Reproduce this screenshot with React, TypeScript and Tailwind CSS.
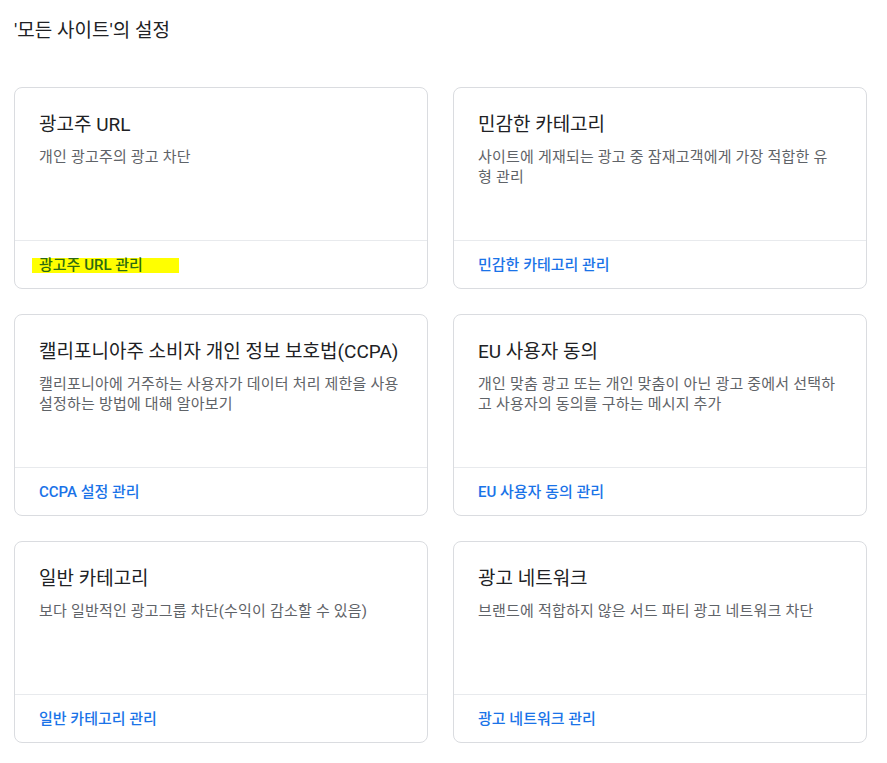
import React from 'react'

type Setting = {
  title: string
  description: string
  link: string
  highlighted?: boolean
}

const SETTINGS: Setting[] = [
  {
    title: '광고주 URL',
    description: '개인 광고주의 광고 차단',
    link: '광고주 URL 관리',
    highlighted: true,
  },
  {
    title: '민감한 카테고리',
    description: '사이트에 게재되는 광고 중 잠재고객에게 가장 적합한 유형 관리',
    link: '민감한 카테고리 관리',
  },
  {
    title: '캘리포니아주 소비자 개인 정보 보호법(CCPA)',
    description: '캘리포니아에 거주하는 사용자가 데이터 처리 제한을 사용 설정하는 방법에 대해 알아보기',
    link: 'CCPA 설정 관리',
  },
  {
    title: 'EU 사용자 동의',
    description: '개인 맞춤 광고 또는 개인 맞춤이 아닌 광고 중에서 선택하고 사용자의 동의를 구하는 메시지 추가',
    link: 'EU 사용자 동의 관리',
  },
  {
    title: '일반 카테고리',
    description: '보다 일반적인 광고그룹 차단(수익이 감소할 수 있음)',
    link: '일반 카테고리 관리',
  },
  {
    title: '광고 네트워크',
    description: '브랜드에 적합하지 않은 서드 파티 광고 네트워크 차단',
    link: '광고 네트워크 관리',
  },
]

const FONT = "font-['Roboto','Noto_Sans_CJK_KR',sans-serif]"

export default function App() {
  return (
    <div className={`min-h-screen bg-white ${FONT} pl-[14px] pt-[19px]`}>
      <h1 className="text-[19px] leading-6 text-[#202124]">'모든 사이트'의 설정</h1>

      <div className="mt-[44px] grid grid-cols-[414px_414px] gap-x-[25px] gap-y-[25px]">
        {SETTINGS.map(s => (
          <SettingCard key={s.title} {...s} />
        ))}
      </div>
    </div>
  )
}

/* -----------------------------
   Sub Components
------------------------------ */

const SettingCard = ({ title, description, link, highlighted }: Setting) => (
  <div className="h-[202px] flex flex-col border border-[#dadce0] rounded-lg bg-white">
    <div className="h-[153px] shrink-0 border-b border-[#e8eaed] px-6 pt-[23px]">
      <div className="text-[19px] leading-7 text-[#202124] whitespace-nowrap">{title}</div>
      <p className="mt-2 w-[361px] break-all text-[15px] leading-5 tracking-[0.2px] text-[#5f6368]">
        {description}
      </p>
    </div>
    <div className="flex-1 flex items-center px-6 pt-[1px]">
      {highlighted ? (
        <span className="-ml-[7px] pl-[7px] inline-block w-[147px] h-[15px] leading-[15px] bg-[#ffff00] text-[15px] font-medium text-[#2b6a12]">
          {link}
        </span>
      ) : (
        <a className="text-[15px] font-medium text-[#1a73e8] cursor-pointer">{link}</a>
      )}
    </div>
  </div>
)
